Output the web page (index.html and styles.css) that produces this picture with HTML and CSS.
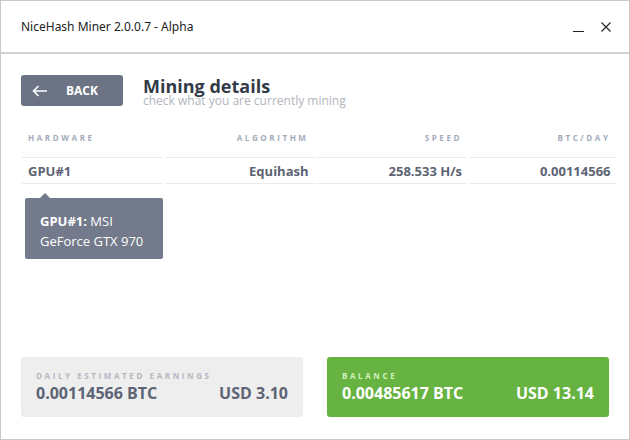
FILE: index.html
```html
<!DOCTYPE html>
<html lang="en">

<head>
    <meta charset="UTF-8">
    <title>NiceHash Miner 2.0.0.7 - Alpha</title>
    <link rel="stylesheet" href="styles.css">
</head>

<body>
    <div class="window">
        <!-- Title bar -->
        <div class="titlebar">
            <span class="title">NiceHash Miner 2.0.0.7 - Alpha</span>
            <div class="controls">
                <span class="minimize"></span>
                <svg class="close" width="10" height="10" viewBox="0 0 10 10">
                    <path d="M0.5 0.5 L9.5 9.5 M9.5 0.5 L0.5 9.5" stroke="#222" stroke-width="1.1" fill="none" />
                </svg>
            </div>
        </div>

        <div class="content">
            <div class="header">
                <button class="back">
                    <svg width="16" height="12" viewBox="0 0 16 12">
                        <path d="M15 6 H1.5 M6.5 1 L1.5 6 L6.5 11" stroke="#fff" stroke-width="1.6" fill="none" />
                    </svg>
                    <span>BACK</span>
                </button>
                <div class="heading">
                    <h1>Mining details</h1>
                    <p>check what you are currently mining</p>
                </div>
            </div>

            <!-- Devices table -->
            <div class="table">
                <div class="th left">HARDWARE</div>
                <div class="th">ALGORITHM</div>
                <div class="th">SPEED</div>
                <div class="th">BTC/DAY</div>

                <div class="td left">GPU#1</div>
                <div class="td">Equihash</div>
                <div class="td">258.533 H/s</div>
                <div class="td">0.00114566</div>
            </div>

            <div class="tooltip">
                <strong>GPU#1:</strong> MSI<br>GeForce GTX 970
            </div>

            <div class="cards">
                <div class="card">
                    <div class="card-label">DAILY ESTIMATED EARNINGS</div>
                    <div class="card-values">
                        <span>0.00114566 BTC</span>
                        <span>USD 3.10</span>
                    </div>
                </div>
                <div class="card green">
                    <div class="card-label">BALANCE</div>
                    <div class="card-values">
                        <span>0.00485617 BTC</span>
                        <span>USD 13.14</span>
                    </div>
                </div>
            </div>
        </div>
    </div>
</body>

</html>
```

FILE: styles.css
```css
body {
    margin: 0;
    font-family: "Open Sans", Arial, sans-serif;
    background: #fff;
}

.window {
    width: 630px;
    height: 440px;
    box-sizing: border-box;
    border: 1px solid #c9c9c9;
    display: flex;
    flex-direction: column;
}

.titlebar {
    height: 51px;
    border-bottom: 2px solid #d2d2d2;
    display: flex;
    align-items: center;
    justify-content: space-between;
    padding: 0 18px 0 20px;
}

.title {
    font-family: "Noto Sans", "Open Sans", sans-serif;
    font-size: 12px;
    color: #222;
}

.controls {
    display: flex;
    align-items: center;
    gap: 17px;
}

.minimize {
    width: 11px;
    height: 1px;
    background: #222;
    margin-top: 9px;
}

.content {
    flex: 1;
    display: flex;
    flex-direction: column;
    padding: 21px 12px 22px 20px;
}

.header {
    display: flex;
    align-items: flex-start;
    gap: 20px;
}

.back {
    width: 102px;
    height: 31px;
    background: #6c7385;
    border: none;
    border-radius: 3px;
    color: #fff;
    display: flex;
    align-items: center;
    padding: 0 0 0 11px;
    gap: 18px;
    font-family: "Open Sans", sans-serif;
    font-weight: bold;
    font-size: 12px;
}

.heading h1 {
    margin: 0;
    font-size: 18px;
    line-height: 18px;
    margin-top: 2px;
    color: #333b47;
}

.heading p {
    margin: 0;
    font-size: 12px;
    line-height: 12px;
    color: #b1b5bd;
}

.table {
    display: grid;
    grid-template-columns: 141px 148px 151px 146px;
    column-gap: 2.5px;
    margin-top: 19px;
    margin-left: 1px;
    width: 595px;
}

.th,
.td {
    text-align: right;
    border-bottom: 1px solid #ebebeb;
    padding: 0 5px 0 6px;
}

.th {
    font-size: 8px;
    font-weight: bold;
    letter-spacing: 2.6px;
    color: #a4abbb;
    height: 31px;
    line-height: 23px;
}

.td {
    font-size: 13px;
    font-weight: bold;
    color: #5c6373;
    height: 25px;
    line-height: 27px;
}

.left {
    text-align: left;
}

.tooltip {
    position: relative;
    align-self: flex-start;
    margin: 14px 0 0 4px;
    width: 138px;
    height: 61px;
    box-sizing: border-box;
    padding: 13px 0 0 15px;
    background: #737a8b;
    border-radius: 2px;
    color: #fff;
    font-size: 13px;
    line-height: 20px;
}

.tooltip::before {
    content: "";
    position: absolute;
    top: -5px;
    left: 15px;
    border-left: 5px solid transparent;
    border-right: 5px solid transparent;
    border-bottom: 5px solid #737a8b;
}

.cards {
    margin-top: auto;
    display: flex;
    gap: 24px;
    padding-right: 8px;
}

.card {
    flex: 1;
    height: 60px;
    box-sizing: border-box;
    background: #eeeeee;
    border-radius: 3px;
    padding: 14px 15px 0 15px;
    color: #5c6475;
}

.card-label {
    font-size: 8px;
    font-weight: bold;
    letter-spacing: 2.6px;
    color: #b3b8c2;
    line-height: 10px;
}

.card-values {
    display: flex;
    justify-content: space-between;
    font-size: 16px;
    font-weight: bold;
    line-height: 20px;
    margin-top: 2px;
}

.card.green {
    background: #66b341;
    color: #fff;
}

.card.green .card-label {
    color: #d4efc0;
}
```
